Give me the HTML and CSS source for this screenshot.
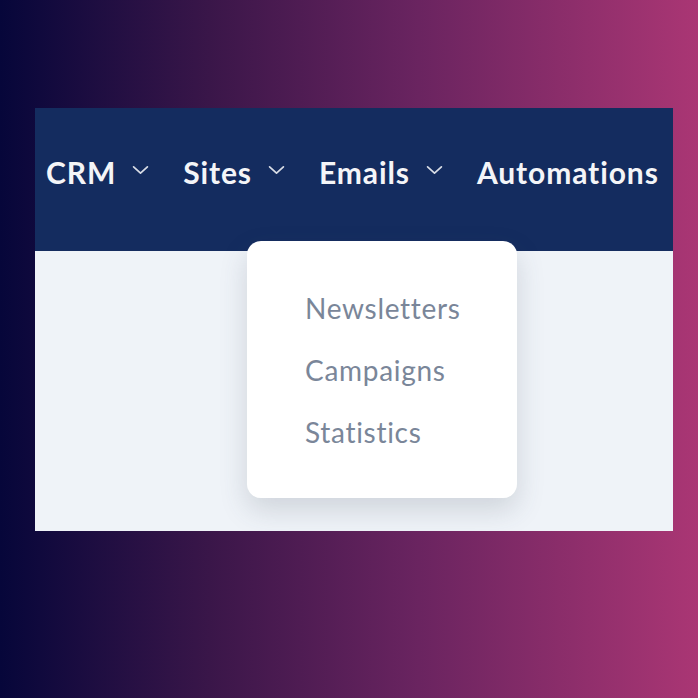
FILE: index.html
```html
<!DOCTYPE html>
<html>
<head>
<meta charset="utf-8">
<link rel="stylesheet" href="styles.css">
</head>
<body>
<div class="stage">
  <div class="frame">
    <nav class="nav">
      <div class="item">CRM <svg class="chev" viewBox="0 0 16 9"><path d="M1.5 1.5 L8 7.5 L14.5 1.5"/></svg></div>
      <div class="item">Sites <svg class="chev" viewBox="0 0 16 9"><path d="M1.5 1.5 L8 7.5 L14.5 1.5"/></svg></div>
      <div class="item">Emails <svg class="chev" viewBox="0 0 16 9"><path d="M1.5 1.5 L8 7.5 L14.5 1.5"/></svg></div>
      <div class="item">Automations</div>
    </nav>
    <div class="content"></div>
    <div class="dropdown">
      <div class="link">Newsletters</div>
      <div class="link">Campaigns</div>
      <div class="link">Statistics</div>
    </div>
  </div>
</div>
</body>
</html>
```
FILE: styles.css
```css
html, body { margin: 0; padding: 0; }
body {
  width: 698px;
  height: 698px;
  overflow: hidden;
  background: linear-gradient(90deg, #06063a 0%, #3a1649 30%, #6a2460 60%, #aa3674 100%);
  font-family: Lato, "Noto Sans", sans-serif;
}
.stage { padding: 108px 0 0 35px; }
.frame {
  position: relative;
  width: 638px;
  height: 423px;
  background: #eff3f8;
  overflow: hidden;
}
.nav {
  height: 143px;
  background: #142c5f;
  display: flex;
  align-items: center;
  padding: 0 0 16px 11px;
  box-sizing: border-box;
  gap: 34px;
}
.item {
  color: #f4f5f8;
  font-weight: 700;
  font-size: 30px;
  letter-spacing: 0.9px;
  display: flex;
  align-items: center;
  gap: 16px;
  white-space: nowrap;
}
.chev {
  width: 17px;
  height: 10px;
  margin-top: -4px;
  fill: none;
  stroke: #d9dde6;
  stroke-width: 1.6;
  stroke-linecap: round;
  stroke-linejoin: round;
}
.content { height: 280px; }
.dropdown {
  position: absolute;
  left: 212px;
  top: 133px;
  width: 270px;
  height: 257px;
  box-sizing: border-box;
  background: #fff;
  border-radius: 14px;
  box-shadow: 0 12px 28px rgba(60, 70, 90, 0.18);
  padding: 48px 0 0 58px;
  display: flex;
  flex-direction: column;
  gap: 24px;
}
.link {
  color: #7a8699;
  font-size: 28px;
  letter-spacing: 0.7px;
  line-height: 38px;
}
```
